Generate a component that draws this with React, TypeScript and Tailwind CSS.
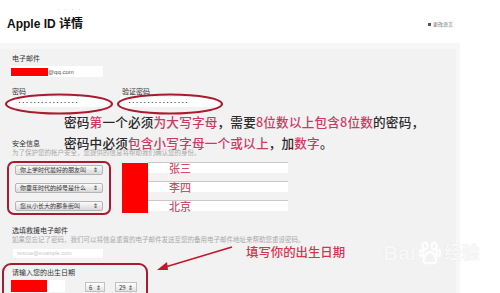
import { ReactNode } from 'react';

const cjk = { fontFamily: '"Noto Sans CJK SC", "Noto Sans", sans-serif' };

const Label = ({ children, className = '' }: { children: ReactNode; className?: string }) => (
  <div className={`ml-[2px] text-[7px] leading-[8px] text-[#333] ${className}`}>{children}</div>
);

const Select = ({ text }: { text: string }) => (
  <div className="flex h-[10px] w-[88px] items-center gap-[2px] rounded-[2px] border border-[#b5b5b5] bg-gradient-to-b from-[#fafafa] to-[#d9d9d9] px-[4px] text-[6px] leading-[8px] text-[#333]">
    <span className="min-w-0 flex-1 whitespace-nowrap">{text}</span>
    <span className="shrink-0 text-[6px]">⇕</span>
  </div>
);

const Answer = ({ text }: { text: string }) => (
  <div className="flex h-[11px] w-[140px] items-center border-t border-[#c8c8c8] bg-white pl-[21px] text-[11px] font-medium leading-[11px] text-[#d0506a]">
    {text}
  </div>
);

const Pink = ({ children }: { children: ReactNode }) => <span className="text-[#cc3a62]">{children}</span>;

export default function App() {
  return (
    <div className="relative h-[293px] w-[500px] overflow-hidden bg-white" style={cjk}>
      {/* header */}
      <div className="relative h-[43px]">
        <div className="absolute left-[56px] top-[5px] text-[5px] tracking-[2px] text-[#d8d8d8]">····</div>
        <div className="pl-[7px] pt-[17px] text-[12px] font-bold leading-[14px] text-[#111]" style={{ fontFamily: '"Liberation Sans", "Noto Sans CJK SC", sans-serif' }}>
          Apple ID 详情
        </div>
        <div className="absolute left-[426px] top-[20px] flex items-center gap-[2px] bg-[#fbfbfb] px-[2px] text-[5px] leading-[8px] text-[#777]">
          <span className="h-[3px] w-[3px] bg-[#555]" />
          <span>更改语言</span>
        </div>
      </div>

      {/* panel */}
      <div className="h-[250px] w-[460px] border-t-[6px] border-r-[4px] border-[#f7f7f7] bg-[#f2f2f2] pl-[10px] pt-[5px]">
        <Label>电子邮件</Label>
        <div className="mt-[4px] flex h-[11px] w-[93px] items-center bg-white pl-[1px]">
          <div className="h-[8px] w-[37px] bg-[#ff0000]" />
          <span className="text-[6px] leading-[8px] text-[#555]" style={{ fontFamily: '"Liberation Sans", sans-serif' }}>
            @qq.com
          </span>
        </div>

        <div className="mt-[10px] flex gap-[12px]">
          <div>
            <Label>密码</Label>
            <div className="mt-[2px] flex h-[10px] w-[98px] items-center bg-white pl-[7px] text-[5px] leading-[6px] tracking-[-1.2px] text-[#222]">
              ••••••••••••••••
            </div>
          </div>
          <div>
            <Label>验证密码</Label>
            <div className="mt-[2px] flex h-[10px] w-[98px] items-center bg-white pl-[7px] text-[5px] leading-[6px] tracking-[-1.2px] text-[#222]">
              ••••••••••••••••
            </div>
          </div>
        </div>

        <Label className="mt-[32px]">安全信息</Label>
        <div className="ml-[2px] mt-[1px] text-[6.5px] leading-[8px] text-[#a8a8a8]">
          为了保护您的帐户安全，您提供的信息将帮助我们确认您的身份。
        </div>

        <div className="mt-[6px] flex">
          <div className="ml-[5px] flex flex-col gap-[8px] pt-[3px]">
            <Select text="你上学时代最好的朋友叫" />
            <Select text="你童年时代的绰号是什么" />
            <Select text="您从小长大的那条街叫" />
          </div>
          <div className="ml-[19px] mt-[1px] h-[50px] w-[26px] bg-[#ff0000]" />
          <div className="flex flex-col gap-[8px]">
            <Answer text="张三" />
            <Answer text="李四" />
            <Answer text="北京" />
          </div>
        </div>

        <Label className="mt-[13px]">选填救援电子邮件</Label>
        <div className="ml-[2px] mt-[1px] whitespace-nowrap text-[6.5px] leading-[8px] text-[#a8a8a8]">
          如果您忘记了密码，我们可以将信息重置的电子邮件发送至您的备用电子邮件地址来帮助您重设密码。
        </div>
        <div className="ml-[3px] mt-[6px] flex h-[9px] w-[90px] items-center bg-white pl-[4px] text-[5.5px] text-[#c8c8c8]" style={{ fontFamily: '"Liberation Sans", sans-serif' }}>
          rescue@example.com
        </div>

        <Label className="mt-[10px] text-[#222]">请输入您的出生日期</Label>
        <div className="mt-[4px] flex items-start">
          <div className="ml-[1px] h-[12px] w-[36px] bg-[#ff0000]" />
          <div className="h-[12px] w-[18px] bg-white" />
          <div className="ml-[20px] mt-[2px] flex h-[10px] w-[20px] items-center justify-between border border-[#c0c0c0] bg-gradient-to-b from-white to-[#e2e2e2] px-[3px] text-[6px] text-[#333]">
            <span>6</span>
            <span>⇕</span>
          </div>
          <div className="ml-[10px] mt-[2px] flex h-[10px] w-[22px] items-center justify-between border border-[#c0c0c0] bg-gradient-to-b from-white to-[#e2e2e2] px-[3px] text-[6px] text-[#333]">
            <span>29</span>
            <span>⇕</span>
          </div>
        </div>
      </div>

      {/* annotations */}
      <div className="absolute left-[64px] top-[114px] whitespace-nowrap text-[12.6px] font-medium leading-[16px] tracking-[0.2px] text-[#2a2a2a]">
        密码<Pink>第</Pink>一个必须<Pink>为大写字母</Pink>，需要<Pink>8位数以上包含8位数</Pink>的密码，
      </div>
      <div className="absolute left-[64px] top-[135px] whitespace-nowrap text-[12.6px] font-medium leading-[16px] tracking-[0.2px] text-[#2a2a2a]">
        密码中必须<Pink>包含小写字母一个或以上</Pink>，加<Pink>数字</Pink>。
      </div>
      <div className="absolute left-[246px] top-[244px] whitespace-nowrap text-[12.4px] font-medium leading-[16px] text-[#d0364f]">
        填写你的出生日期
      </div>

      <svg className="pointer-events-none absolute left-0 top-0" width="500" height="293" viewBox="0 0 500 293">
        <g fill="none" stroke="#a81c30" strokeWidth="2">
          <ellipse cx="59" cy="104" rx="53" ry="9.5" />
          <ellipse cx="170" cy="104" rx="52" ry="9.5" />
          <rect x="8" y="162" width="102" height="52" rx="6" />
          <rect x="3" y="264" width="144" height="40" rx="8" />
          <path d="M232 247 L162 268" strokeWidth="1.6" stroke="#c0182c" />
        </g>
        <path d="M157 270 L167 262 L168 270 Z" fill="#c0182c" />
      </svg>

      {/* watermark */}
      <div className="absolute left-[383px] top-[240px] flex items-center gap-[3px] text-[21px] font-bold leading-[26px] text-white/80" style={{ fontFamily: '"Liberation Sans", "Noto Sans CJK SC", sans-serif', textShadow: '0 0 1px #d8d8d8' }}>
        <span>Bai</span>
        <svg width="22" height="24" viewBox="0 0 22 24" fill="none" stroke="#ffffff" strokeWidth="2.4" opacity="0.85">
          <ellipse cx="6" cy="5" rx="2.5" ry="3.5" />
          <ellipse cx="15" cy="5" rx="2.5" ry="3.5" />
          <ellipse cx="2.5" cy="12" rx="2" ry="3" />
          <ellipse cx="19.5" cy="12" rx="2" ry="3" />
          <path d="M11 11 C7 11 4 18 5 21 C6 23 9 22 11 22 C13 22 16 23 17 21 C18 18 15 11 11 11 Z" />
        </svg>
        <span className="text-[18px]">经验</span>
      </div>
    </div>
  );
}
